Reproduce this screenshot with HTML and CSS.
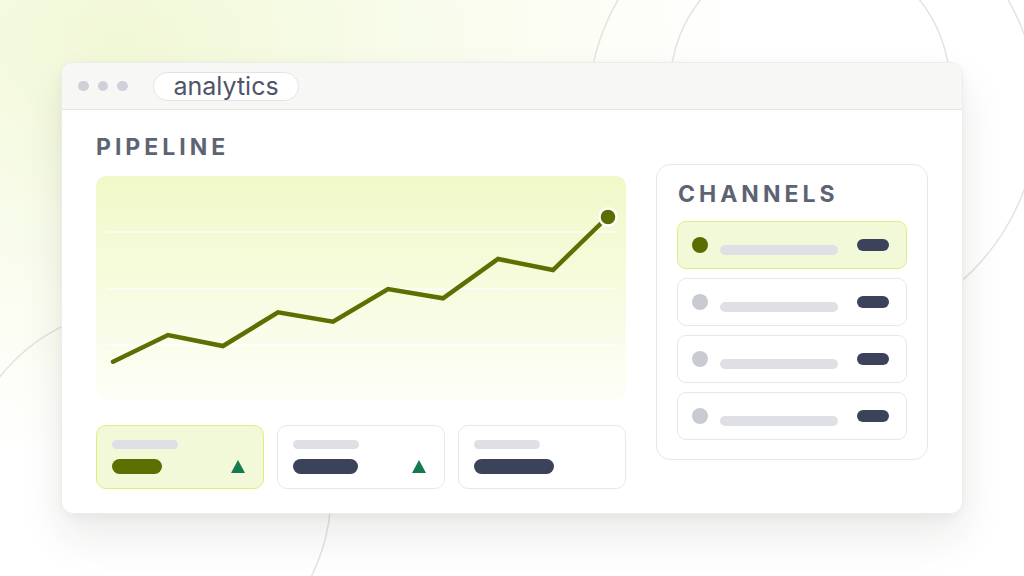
FILE: index.html
```html
<!DOCTYPE html>
<html lang="en">
<head>
<meta charset="utf-8">
<title>analytics</title>
<link rel="stylesheet" href="styles.css">
</head>
<body>
<div class="stage">
  <svg class="rings" width="1024" height="576" viewBox="0 0 1024 576" aria-hidden="true">
    <circle cx="810" cy="87" r="140"/>
    <circle cx="813" cy="112" r="225"/>
    <circle cx="145" cy="493" r="186"/>
  </svg>
  <div class="window">
    <div class="titlebar">
      <div class="dots"><span></span><span></span><span></span></div>
      <div class="tab">analytics</div>
    </div>
    <div class="content">
      <section class="pipeline">
        <h2 class="heading">PIPELINE</h2>
        <div class="chart">
          <svg width="530" height="224" viewBox="0 0 530 224">
            <g class="grid">
              <line x1="10" y1="56" x2="520" y2="56"/>
              <line x1="10" y1="113" x2="520" y2="113"/>
              <line x1="10" y1="169" x2="520" y2="169"/>
            </g>
            <polyline class="trend" points="17,185.7 72,159 127,170 182,136.3 237,145.7 292,113 347,122.3 402,83 457,94 509,43.5"/>
            <circle class="endpoint" cx="512" cy="41" r="8.5"/>
          </svg>
        </div>
        <div class="stats">
          <div class="stat active">
            <div class="label"></div>
            <div class="value-row"><div class="value w50"></div><span class="up"></span></div>
          </div>
          <div class="stat">
            <div class="label"></div>
            <div class="value-row"><div class="value w65"></div><span class="up"></span></div>
          </div>
          <div class="stat">
            <div class="label"></div>
            <div class="value-row"><div class="value w80"></div></div>
          </div>
        </div>
      </section>
      <aside class="channels">
        <h2 class="heading">CHANNELS</h2>
        <ul class="list">
          <li class="row active"><span class="dot"></span><span class="name"></span><span class="pill"></span></li>
          <li class="row"><span class="dot"></span><span class="name"></span><span class="pill"></span></li>
          <li class="row"><span class="dot"></span><span class="name"></span><span class="pill"></span></li>
          <li class="row"><span class="dot"></span><span class="name"></span><span class="pill"></span></li>
        </ul>
      </aside>
    </div>
  </div>
</div>
</body>
</html>
```

FILE: styles.css
```css
* { box-sizing: border-box; }
html, body { margin: 0; padding: 0; }
body {
  width: 1024px;
  height: 576px;
  overflow: hidden;
  font-family: Inter, "Noto Sans", "Liberation Sans", sans-serif;
  background:
    radial-gradient(ellipse 620px 420px at 120px 40px, #f1f8d6 0%, rgba(244,250,222,0.7) 40%, rgba(255,255,255,0) 100%),
    #ffffff;
}
.stage {
  position: relative;
  width: 1024px;
  height: 576px;
  padding: 62px 0 0 61px;
}
.rings {
  position: absolute;
  left: 0;
  top: 0;
  z-index: 0;
}
.rings circle {
  fill: none;
  stroke: #e3e3e1;
  stroke-width: 1.5;
}
.window {
  position: relative;
  z-index: 1;
  width: 902px;
  height: 452px;
  background: #ffffff;
  border: 1px solid #ececea;
  border-radius: 12px;
  overflow: hidden;
  box-shadow: 0 22px 44px rgba(30, 35, 20, 0.09), 0 4px 12px rgba(30, 35, 20, 0.04);
}
.titlebar {
  height: 47px;
  background: #f7f7f6;
  border-bottom: 1px solid #e7e7e5;
  display: flex;
  align-items: center;
  padding-left: 16px;
}
.dots { display: flex; gap: 9px; }
.dots span {
  width: 10.5px;
  height: 10.5px;
  border-radius: 50%;
  background: #cfd0d8;
}
.tab {
  margin-left: 25px;
  height: 29px;
  padding: 0 19px 0 20px;
  border: 1px solid #e3e3e1;
  border-radius: 15px;
  background: #ffffff;
  color: #505566;
  font-size: 25px;
  line-height: 25px;
  display: flex;
  align-items: center;
}
.content {
  display: flex;
  align-items: center;
  gap: 30px;
  padding: 24px 0 0 34px;
}
.heading {
  margin: 0;
  font-size: 23px;
  line-height: 27px;
  font-weight: 700;
  letter-spacing: 4px;
  color: #5e6373;
}
.pipeline { width: 530px; }
.chart {
  margin-top: 15px;
  height: 224px;
  border-radius: 10px;
  background: linear-gradient(180deg, #f1f8c8 0%, #f6fbdc 45%, #fbfdee 80%, #fdfef7 100%);
}
.chart svg { display: block; }
.grid line { stroke: #ffffff; stroke-width: 1.5; opacity: 0.8; }
.trend {
  fill: none;
  stroke: #5b7000;
  stroke-width: 4.5;
  stroke-linejoin: miter;
  stroke-linecap: round;
}
.endpoint { fill: #5a6e00; stroke: #ffffff; stroke-width: 2.5; }
.stats {
  margin-top: 25px;
  display: grid;
  grid-template-columns: repeat(3, 1fr);
  gap: 13px;
}
.stat {
  height: 64px;
  border: 1.5px solid #e8e8e6;
  border-radius: 10px;
  background: #ffffff;
  padding: 14px 18px 0 15px;
}
.stat.active { background: #f2f9d9; border-color: #dcef7c; }
.label {
  width: 66px;
  height: 9px;
  border-radius: 5px;
  background: #dfe0e5;
}
.value-row {
  margin-top: 10px;
  display: flex;
  align-items: center;
  justify-content: space-between;
}
.value { height: 15px; border-radius: 8px; background: #3b4259; }
.stat.active .value { background: #5b7000; }
.w50 { width: 50px; }
.w65 { width: 65px; }
.w80 { width: 80px; }
.up {
  width: 0;
  height: 0;
  border-left: 7px solid transparent;
  border-right: 7px solid transparent;
  border-bottom: 13px solid #137a52;
}
.channels {
  width: 272px;
  height: 296px;
  border: 1.5px solid #e8e8e6;
  border-radius: 14px;
  background: #ffffff;
  padding: 16px 20px 0 20px;
  margin-top: 1px;
}
.channels .heading { padding-left: 1px; }
.list {
  list-style: none;
  margin: 13px 0 0 0;
  padding: 0;
  display: flex;
  flex-direction: column;
  gap: 9px;
}
.row {
  height: 48px;
  border: 1.5px solid #e8e8e6;
  border-radius: 9px;
  background: #ffffff;
  display: flex;
  align-items: center;
  padding: 0 17px 0 14px;
}
.row.active { background: #f2f9d9; border-color: #dcef7c; }
.dot {
  width: 16px;
  height: 16px;
  border-radius: 50%;
  background: #c9cbd3;
  flex: none;
}
.row.active .dot { background: #5a6e00; }
.name {
  margin-left: 12px;
  margin-top: 10px;
  width: 118px;
  height: 9.5px;
  border-radius: 5px;
  background: #dfe0e5;
}
.pill {
  margin-left: auto;
  width: 32px;
  height: 12px;
  border-radius: 6px;
  background: #3b4259;
}
```
